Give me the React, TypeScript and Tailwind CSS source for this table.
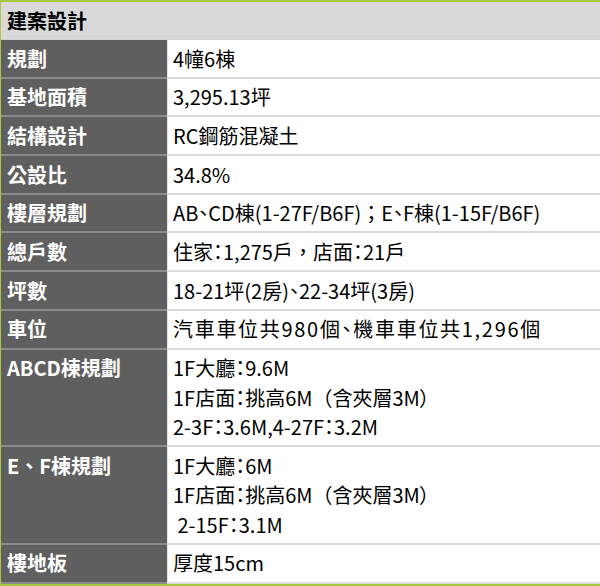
const rows: { label: string; lines: string[]; extra?: string }[] = [
  { label: '規劃', lines: ['4幢6棟'] },
  { label: '基地面積', lines: ['3,295.13坪'] },
  { label: '結構設計', lines: ['RC鋼筋混凝土'] },
  { label: '公設比', lines: ['34.8%'] },
  { label: '樓層規劃', lines: ['AB、CD棟(1-27F/B6F){；}E、F棟(1-15F/B6F)'] },
  { label: '總戶數', lines: ['住家：1,275戶{，}店面：21戶'] },
  { label: '坪數', lines: ['18-21坪(2房)、22-34坪(3房)'] },
  { label: '車位', lines: ['汽車車位共980個、機車車位共1,296個'], extra: 'tracking-[1.7px]' },
  {
    label: 'ABCD棟規劃',
    lines: ['1F大廳：9.6M', '1F店面：挑高6M{（}含夾層3M）', '2-3F：3.6M,4-27F：3.2M'],
  },
  {
    label: 'E、F棟規劃',
    lines: ['1F大廳：6M', '1F店面：挑高6M{（}含夾層3M）', ' 2-15F：3.1M'],
  },
  { label: '樓地板', lines: ['厚度15cm'] },
]

// segments in {} keep full-width punctuation, the rest is set with palt
function Line({ text }: { text: string }) {
  const parts = text.split(/(\{[^}]*\})/).filter(Boolean)
  return (
    <div>
      {parts.map((p, i) =>
        p.startsWith('{') ? (
          <span key={i} className="[font-feature-settings:normal]">
            {p.slice(1, -1)}
          </span>
        ) : (
          <span key={i}>{p}</span>
        ),
      )}
    </div>
  )
}

export default function App() {
  return (
    <div
      className="w-[600px] h-[586px] overflow-hidden bg-white text-[20px]"
      style={{ fontFamily: '"Noto Sans CJK TC", "Noto Sans", sans-serif' }}
    >
      <div className="border-l border-t-2 border-b-2 border-[#a8c93c]">
        <div className="h-[38px] bg-[#d9d9d9] border-b border-[#cfcfcf] pl-[6px] flex items-center font-bold text-black">
          建案設計
        </div>
        {rows.map((row) => (
          <div key={row.label} className="flex">
            <div className="w-[166px] shrink-0 bg-[#5f5f5f] border-b-2 border-[#8a8a8a] pl-[6px] py-[3.6px] leading-[29.5px] font-bold text-white">
              {row.label}
            </div>
            <div
              className={`flex-1 bg-white border-b-2 border-[#dadada] border-l border-l-[#e5e5e5] pl-[5px] py-[3.6px] leading-[29.5px] text-black whitespace-pre [font-feature-settings:'palt'] ${row.extra ?? ''}`}
            >
              {row.lines.map((line, i) => (
                <Line key={i} text={line} />
              ))}
            </div>
          </div>
        ))}
      </div>
    </div>
  )
}
